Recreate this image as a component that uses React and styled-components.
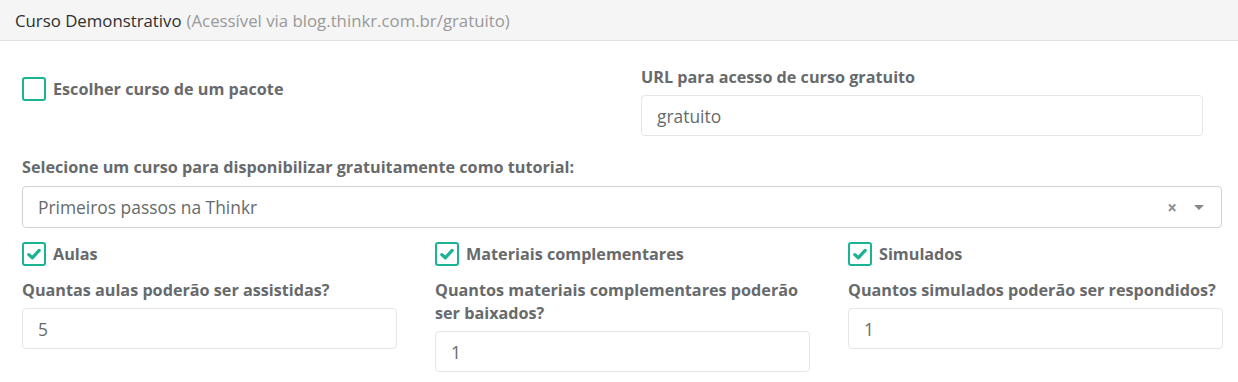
import React from 'react';
import styled, { createGlobalStyle } from 'styled-components';

const Global = createGlobalStyle`
  body {
    margin: 0;
    background: #fff;
    font-family: "Open Sans", "Noto Sans", sans-serif;
  }
`

const Panel = styled.div`
  width: 1238px;
  background: #fff;
`
const Header = styled.div`
  height: 40px;
  display: flex;
  align-items: center;
  padding: 0 15px;
  background: #f5f5f5;
  border-bottom: 1px solid #e2e2e2;
  font-size: 16.8px;
  color: #2f2f2f;
`
const Muted = styled.span`
  color: #999;
  margin-left: 5px;
`
const Body = styled.div`
  padding: 25px 16px 20px 22px;
`
const TopRow = styled.div`
  display: grid;
  grid-template-columns: 619px 562px;
`
const Field = styled.div`
  display: flex;
  flex-direction: column;
  margin-top: ${p => p.$top || 0}px;
`
const Label = styled.label`
  font-size: 16.2px;
  font-weight: 700;
  line-height: 23px;
  color: #676a6c;
  margin-bottom: ${p => p.$gap || 6}px;
`
const Input = styled.div`
  height: 41px;
  box-sizing: border-box;
  border: 1px solid #e5e6e7;
  border-radius: 4px;
  padding: 0 15px;
  display: flex;
  align-items: center;
  font-size: 17.4px;
  color: #676a6c;
`
const Select = styled(Input)`
  height: 42px;
  border-color: #d2d2d2;
  justify-content: space-between;
`
const SelectTools = styled.div`
  display: flex;
  align-items: center;
  gap: 17px;
  color: #8a8f99;
  font-size: 17px;
  font-weight: 700;
  padding-right: 2px;
`
const Caret = styled.span`
  width: 0;
  height: 0;
  border-left: 5px solid transparent;
  border-right: 5px solid transparent;
  border-top: 5px solid #888;
`
const CheckRow = styled.label`
  display: flex;
  align-items: center;
  gap: 7px;
  padding-top: ${p => p.$top || 0}px;
  font-size: 16.2px;
  font-weight: 700;
  color: #676a6c;
`
const Box = styled.span`
  width: 24px;
  height: 24px;
  box-sizing: border-box;
  border: 2px solid #1ab394;
  border-radius: 3px;
  display: flex;
  align-items: center;
  justify-content: center;
  flex-shrink: 0;
`
const Columns = styled.div`
  display: grid;
  grid-template-columns: repeat(3, 375px);
  column-gap: 38px;
  margin-top: 14px;
`
const Column = styled.div`
  display: flex;
  flex-direction: column;
`
const Spacer = styled.div`
  height: 13px;
`

function Check({ checked, children, top }) {
  return (
    <CheckRow $top={top}>
      <Box>
        {checked && (
          <svg width="14" height="12" viewBox="0 0 14 12">
            <path d="M1.8 6.6 L5.3 9.8 L12.2 2.4" fill="none" stroke="#1ab394" strokeWidth="3.2" strokeLinecap="round" strokeLinejoin="round" />
          </svg>
        )}
      </Box>
      {children}
    </CheckRow>
  )
}

const options = [
  { name: 'Aulas', q: 'Quantas aulas poderão ser assistidas?', value: '5' },
  { name: 'Materiais complementares', q: 'Quantos materiais complementares poderão ser baixados?', value: '1' },
  { name: 'Simulados', q: 'Quantos simulados poderão ser respondidos?', value: '1' },
]

export default function App() {
  return (
    <Panel>
      <Global />
      <Header>
        Curso Demonstrativo<Muted>(Acessível via blog.thinkr.com.br/gratuito)</Muted>
      </Header>
      <Body>
        <TopRow>
          <div>
            <Check top={11}>Escolher curso de um pacote</Check>
          </div>
          <Field>
            <Label>URL para acesso de curso gratuito</Label>
            <Input>gratuito</Input>
          </Field>
        </TopRow>
        <Field $top={20}>
          <Label $gap={7}>Selecione um curso para disponibilizar gratuitamente como tutorial:</Label>
          <Select>
            Primeiros passos na Thinkr
            <SelectTools>
              <span>×</span>
              <Caret />
            </SelectTools>
          </Select>
        </Field>
        <Columns>
          {options.map(o => (
            <Column key={o.name}>
              <Check checked>{o.name}</Check>
              <Spacer />
              <Label>{o.q}</Label>
              <Input>{o.value}</Input>
            </Column>
          ))}
        </Columns>
      </Body>
    </Panel>
  )
}
